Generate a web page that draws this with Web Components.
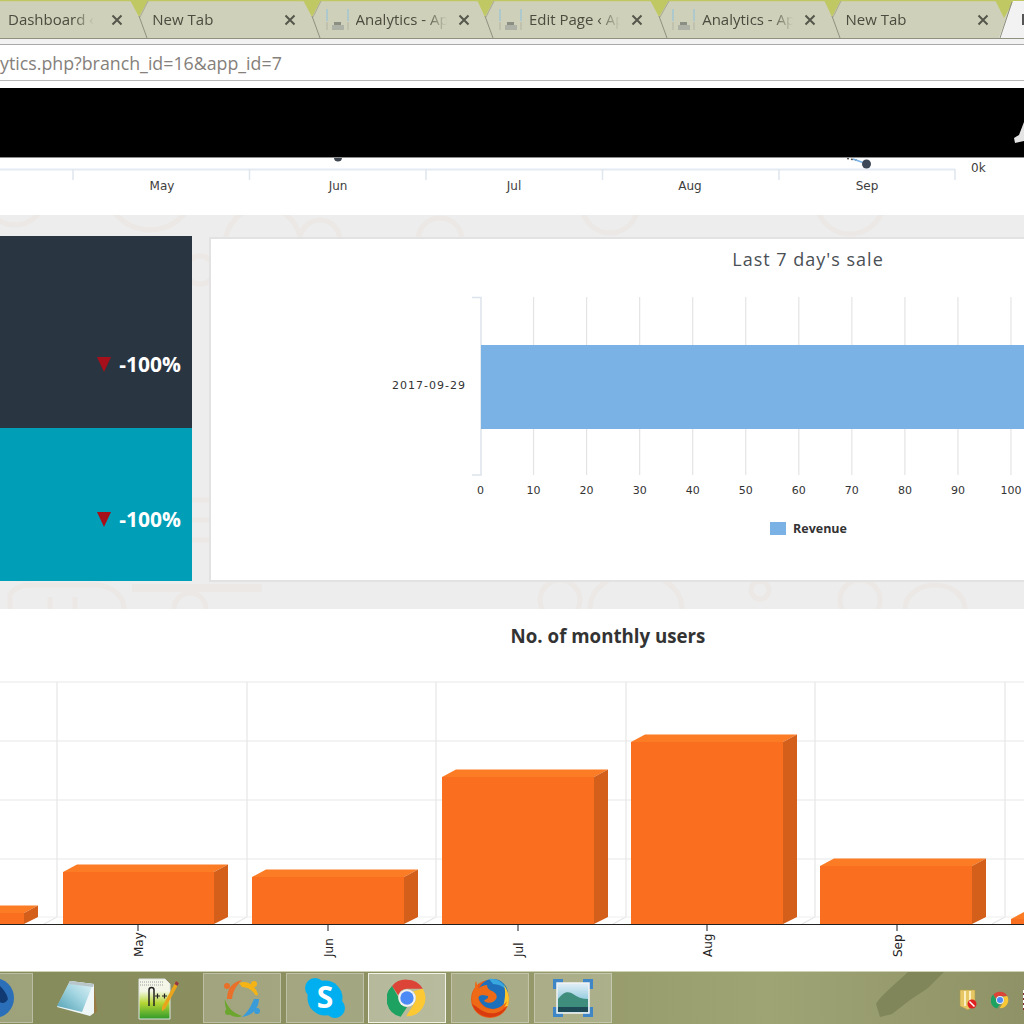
<!DOCTYPE html>
<html>
<head>
<meta charset="utf-8">
<title>Analytics</title>
<style>
	html, body { margin: 0; padding: 0; }
	body { width: 1024px; height: 1024px; overflow: hidden; display: flex; flex-direction: column; font-family: "Open Sans", "Liberation Sans", sans-serif; background: #fff; }
</style>
</head>
<body>

<browser-tabs>
	<browser-tab style="width:173.3px;--tab-pad:34px;--title-w:88px" plain>Dashboard ‹ App Lab</browser-tab>
	<browser-tab style="width:173.3px" plain>New Tab</browser-tab>
	<browser-tab style="width:173.3px">Analytics - App Lab</browser-tab>
	<browser-tab style="width:173.3px">Edit Page ‹ App Lab</browser-tab>
	<browser-tab style="width:173.3px">Analytics - App Lab</browser-tab>
	<browser-tab style="width:160px" plain>New Tab</browser-tab>
</browser-tabs>
<address-bar>ytics.php?branch_id=16&amp;app_id=7</address-bar>
<top-header></top-header>
<month-strip></month-strip>

<panel-row>
	<div slot="tiles">
		<stat-tile style="--tile-bg:#2a3542;--tile-h:192px;--tile-top:114px">-100%</stat-tile>
		<stat-tile style="--tile-bg:#009fb7;--tile-h:153px;--tile-top:77px">-100%</stat-tile>
	</div>
	<sale-chart slot="chart"></sale-chart>
</panel-row>

<users-chart></users-chart>

<task-bar>
	<task-button>
		<svg width="40" height="40" viewBox="0 0 40 40">
			<circle cx="20" cy="20" r="20" fill="#2a6fb8"/>
			<path d="M20 4c6 3 12 9 14 17-3 6-8 4-11 1s-7-2-9 2-1 9 4 12c-9 1-14-5-15-12 3-9 9-17 17-20z" fill="#123a72"/>
		</svg>
	</task-button>
	<task-button plain>
		<svg width="44" height="44" viewBox="0 0 44 44">
			<defs><linearGradient id="pad" x1="0" y1="1" x2="1" y2="0"><stop offset="0" stop-color="#4f9fb2"/><stop offset=".55" stop-color="#a4d6e2"/><stop offset="1" stop-color="#e4f4f7"/></linearGradient></defs>
			<path d="M39 8l3 27-3 3z" fill="#9a7a45"/>
			<path d="M15 5L39 8 39 37 35 40 2 31z" fill="#eef6f8"/>
			<path d="M15 5L38 8 27 36 2 30z" fill="url(#pad)"/>
			<path d="M15 5L39 8 38 11 14 8z" fill="#b9c6c9"/>
		</svg>
	</task-button>
	<task-button plain>
		<svg width="44" height="44" viewBox="0 0 44 44">
			<defs><linearGradient id="np" x1="0" y1="0" x2="0" y2="1"><stop offset=".3" stop-color="#f4f7e8"/><stop offset=".6" stop-color="#b5d634"/><stop offset="1" stop-color="#2f9a2a"/></linearGradient></defs>
			<path d="M2 3h26l5 5v35H2z" fill="url(#np)" stroke="#dfe3e3"/>
			<path d="M3 6h24M3 9h24" stroke="#9b9f9f" stroke-dasharray="1 1"/>
			<path d="M12 30V14a2.5 2.5 0 0 1 5 0v16" fill="none" stroke="#222" stroke-width="1.5"/>
			<path d="M18 20h5m-2.500-2.500v5M25 20h5m-2.500-2.500v5" stroke="#222" stroke-width="1.200"/>
			<path d="M39 5l3 2-14 26-3 2 0-4z" fill="#eaa51d"/>
			<path d="M39 5l3 2-1.500 3-3-2z" fill="#8f3a44"/>
		</svg>
	</task-button>
	<task-button>
		<svg width="40" height="42" viewBox="0 0 40 42">
			<path d="M5 22C5 12 10 5 20 3 14 9 11 14 10 22z" fill="#e8702a"/><circle cx="5" cy="9" r="3" fill="#e8702a"/>
			<path d="M17 6c8-3 15 1 19 11-1 3-3 1-4-1-3-4-7-6-12-6z" fill="#f5b414"/><circle cx="32" cy="7" r="3" fill="#f5b414"/>
			<path d="M37 22c0 9-7 17-17 18 6-5 9-11 12-18z" fill="#3a9bd9"/><circle cx="35" cy="34" r="3" fill="#3a9bd9"/>
			<path d="M3 22c2 8 8 14 17 17-3 2-10 1-13-2-2-2-5-9-4-15z" fill="#6da62f"/><circle cx="6" cy="35" r="3" fill="#6da62f"/>
		</svg>
	</task-button>
	<task-button>
		<svg width="42" height="42" viewBox="0 0 42 42">
			<circle cx="11" cy="11" r="10" fill="#00aff0"/><circle cx="31" cy="31" r="10" fill="#00aff0"/>
			<circle cx="21" cy="21" r="17.500" fill="#00aff0"/>
			<text x="21" y="31" text-anchor="middle" font-family="Open Sans, sans-serif" font-weight="700" font-size="30" fill="#fff">S</text>
		</svg>
	</task-button>
	<task-button active>
		<chrome-icon style="--size:40px"></chrome-icon>
	</task-button>
	<task-button>
		<svg width="42" height="42" viewBox="0 0 42 42">
			<circle cx="21" cy="22" r="19" fill="#ea5a16"/>
			<circle cx="24" cy="17" r="15" fill="#1f70ba"/>
			<path d="M20 2c8-1 15 4 18 11-4-4-9-6-14-6z" fill="#38a6df"/>
			<path d="M35 8c5 7 6 14 4 21l-5 1c2-7 3-15 1-22z" fill="#fcc52a"/>
			<path d="M7 4c1 3 2 5 2 8 3-3 6-4 9-4 0 3 2 5 5 6 4 2 6 5 4 8-2 4-8 5-12 2 1-2 5-2 4-5l-5-1c-3 0-4 1-5 3 1 6 7 11 13 11 6 1 12-3 16-8-2 8-9 14-18 14C10 38 3 30 3 22c0-4 1-8 3-11 0-2 0-5 1-7z" fill="#ef6a16"/>
			<path d="M3 27c3 8 10 13 18 13 8 0 14-4 17-11-6 7-15 9-22 6-5-2-9-6-13-8z" fill="#d83b0f"/>
		</svg>
	</task-button>
	<task-button>
		<svg width="42" height="40" viewBox="0 0 42 40">
			<defs><linearGradient id="sky" x1="0" y1="0" x2="0" y2="1"><stop offset="0" stop-color="#e4f0f7"/><stop offset=".5" stop-color="#9ccfe2"/><stop offset="1" stop-color="#6fb3c8"/></linearGradient></defs>
			<path d="M1 11V1h10v4H5v6zM31 1h10v10h-4V5h-6zM1 29h4v6h6v4H1zM37 29h4v10H31v-4h6z" fill="#3f86c6"/>
			<rect x="5" y="5" width="32" height="30" fill="url(#sky)" stroke="#f4f4f4" stroke-width="1.500"/>
			<path d="M6 21c6-8 11-8 15-5 4 3 9 5 15 5v8H6z" fill="#3f8d7c"/>
			<path d="M6 29h30v5H6z" fill="#1e4a55"/>
		</svg>
	</task-button>
</task-bar>

<template id="browserTabTemplate">
	<style>
		:host { display: flex; align-items: center; box-sizing: border-box; height: 38px; padding-left: var(--tab-pad, 5px); flex: none; position: relative; color: #4b4b3f; font: 15px "Open Sans", sans-serif; }
		.icon { flex: none; width: 23px; height: 23px; margin-right: 7px; }
		:host([plain]) .icon { display: none; }
		.title { flex: none; white-space: nowrap; overflow: hidden; -webkit-mask-image: linear-gradient(90deg, #000 75%, transparent 98%); mask-image: linear-gradient(90deg, #000 75%, transparent 98%); width: var(--title-w, 122px); }
		:host(:not([plain])) .title { width: 93px; }
		.close { position: absolute; left: 137px; top: 14px; width: 12px; height: 12px; }
	</style>
	<svg class="icon" viewBox="0 0 23 23">
		<path d="M1 1v12M22 1v12" stroke="#8cc1e0" stroke-width="1" fill="none"/>
		<path d="M1 14v8M22 14v8" stroke="#b0b3a5" fill="none"/>
		<path d="M6 17h12v5H6z" fill="#aeb1a6"/>
		<path d="M8 14h7v3H8z" fill="#8b8e83"/>
	</svg>
	<span class="title"><slot></slot></span>
	<svg class="close" viewBox="0 0 12 12"><path d="M1.500 1.500l9 9m0-9l-9 9" stroke="#55564c" stroke-width="2"/></svg>
</template>

<template id="browserTabsTemplate">
	<style>
		:host { display: block; position: relative; height: 44px; background: #f2f2f2; border-bottom: 1px solid #a9a9a9; box-sizing: content-box; flex: none; overflow: hidden; }
		.strip { display: flex; margin-left: -26px; height: 38px; background: #cfd0b9; box-shadow: 0 1px 0 #8f9080; width: 1100px; }
		.shape { position: absolute; left: 0; top: 0; }
	</style>
	<div class="strip"><slot></slot></div>
	<svg class="shape" width="1024" height="44" viewBox="0 0 1024 44"></svg>
</template>

<template id="addressBarTemplate">
	<style>
		:host { display: block; flex: none; height: 35px; background: #fff; border-bottom: 1px solid #b9b9b9; overflow: hidden; color: #85807b; font: 17.800px/36px "Open Sans", sans-serif; }
		.url { display: block; white-space: nowrap; }
	</style>
	<span class="url"><slot></slot></span>
</template>

<template id="topHeaderTemplate">
	<style>
		:host { display: block; flex: none; margin-top: 7px; height: 69px; background: #000; border-bottom: 1px solid #8d8d8d; position: relative; overflow: hidden; }
		svg { display: block; }
	</style>
	<svg width="1024" height="69" viewBox="0 88 1024 69"><path d="M1024 122l-5 13-5 3 1 5 9-2z" fill="#e4e4e4"/></svg>
</template>

<template id="monthStripTemplate">
	<style>
		:host { display: block; flex: none; height: 57px; background: #fff; overflow: hidden; }
		svg { display: block; }
		text { font: 12px "DejaVu Sans", sans-serif; fill: #3d3d3d; }
	</style>
	<svg width="1024" height="57" viewBox="0 158 1024 57">
		<path d="M0 169.500H955" stroke="#e4eaf1" stroke-width="2"/>
		<path d="M73 169v11M249.500 169v11M426 169v11M602.500 169v11M779 169v11M955 169v11" stroke="#dfe6ee" stroke-width="1.500"/>
		<text x="162" y="190" text-anchor="middle">May</text>
		<text x="338" y="190" text-anchor="middle">Jun</text>
		<text x="514" y="190" text-anchor="middle">Jul</text>
		<text x="690" y="190" text-anchor="middle">Aug</text>
		<text x="867" y="190" text-anchor="middle">Sep</text>
		<text x="971" y="172">0k</text>
		<circle cx="338" cy="157.500" r="4" fill="#3f4650"/>
		<path d="M847 158.500l12 2" stroke="#555" stroke-width="1.500" stroke-dasharray="2 2"/>
		<path d="M853 159l14 5" stroke="#7ab2e6" stroke-width="1.500"/>
		<circle cx="866.500" cy="164" r="4.500" fill="#3c4858"/>
	</svg>
</template>

<template id="panelRowTemplate">
	<style>
		:host { display: flex; flex: none; position: relative; gap: 17px; height: 394px; box-sizing: border-box; padding-top: 21px; background: #eeeded; overflow: hidden; }
		.doodle { position: absolute; left: 0; top: 0; }
		.tiles { position: relative; flex: none; width: 192px; }
		.chart { position: relative; flex: none; }
	</style>
	<svg class="doodle" width="1024" height="394" viewBox="0 215 1024 394" fill="none" stroke="#ebe8e5" stroke-width="5">
		<circle cx="15" cy="195" r="30"/><circle cx="150" cy="185" r="45"/><circle cx="263" cy="245" r="38"/>
		<circle cx="320" cy="240" r="20"/><circle cx="440" cy="240" r="22"/>
		<circle cx="850" cy="200" r="34"/><circle cx="610" cy="205" r="28"/>
		<circle cx="200" cy="270" r="14"/>
		<path d="M192 500h17M192 520h17M192 540h17"/>
		<path d="M132 588h130" stroke-width="8"/><path d="M10 609v-14a20 16 0 0 1 20-10h60a30 24 0 0 1 34 24"/>
		<path d="M50 609v-12M75 609v-12"/><circle cx="190" cy="609" r="16"/>
		<circle cx="560" cy="600" r="20"/><path d="M590 609a46 36 0 0 1 92 0"/><circle cx="760" cy="590" r="9"/><circle cx="860" cy="600" r="20"/>
		<path d="M905 609a30 24 0 0 1 60 0"/>
	</svg>
	<div class="tiles"><slot name="tiles"></slot></div>
	<div class="chart"><slot name="chart"></slot></div>
</template>

<template id="statTileTemplate">
	<style>
		:host { display: flex; justify-content: flex-end; box-sizing: border-box; height: var(--tile-h); padding: var(--tile-top) 11px 0 0; background: var(--tile-bg); color: #fff; font: 700 21px/28px "Open Sans", sans-serif; }
		.down { width: 0; height: 0; margin: 7px 8px 0 0; border-left: 7.500px solid transparent; border-right: 7.500px solid transparent; border-top: 15px solid #a5101a; }
	</style>
	<span class="down"></span><span><slot></slot></span>
</template>

<template id="saleChartTemplate">
	<style>
		:host { display: block; width: 1000px; height: 345px; box-sizing: border-box; background: #fff; border: 2px solid #e2e2e2; border-right: 0; margin-top: 0.500px; }
		svg { display: block; }
		text { font-family: "DejaVu Sans", sans-serif; fill: #333; font-size: 11px; }
		.title { font: 18px "Open Sans", sans-serif; letter-spacing: 1px; fill: #4a4f55; }
		.legend { font: 700 12.500px "Open Sans", sans-serif; fill: #333; }
	</style>
	<svg width="1000" height="343" viewBox="211 239 1000 343"></svg>
</template>

<template id="usersChartTemplate">
	<style>
		:host { display: block; flex: none; height: 362px; background: #fff; overflow: hidden; }
		svg { display: block; }
		.title { font: 700 18.700px "Open Sans", sans-serif; fill: #333; }
		.tick { font: 12px "DejaVu Sans", sans-serif; fill: #222; }
	</style>
	<svg width="1024" height="362" viewBox="0 609 1024 362"></svg>
</template>

<template id="taskBarTemplate">
	<style>
		:host { display: flex; flex: 1; align-items: stretch; position: relative; box-sizing: border-box; padding: 1px 0 2px; border-top: 1px solid #cfd2b4; background: linear-gradient(90deg, #868b5b 0%, #8d9162 35%, #9fa475 75%, #8e9266 100%); overflow: hidden; }
		.blob { position: absolute; left: 860px; top: 0; }
		.inner { display: flex; gap: 4.700px; margin-left: -45px; position: relative; }
		.tray { position: absolute; left: 959px; top: 17px; display: flex; align-items: center; gap: 14px; }
		.cut { width: 6px; height: 20px; background: repeating-linear-gradient(#fff 0 3px, #7d2a2a 3px 5px); }
	</style>
	<svg class="blob" width="90" height="52" viewBox="0 0 90 52"><path d="M16 32C20 24 40 8 48 0H84L68 16 50 28 32 42 20 45z" fill="#80855a"/></svg>
	<div class="inner"><slot></slot></div>
	<div class="tray">
		<svg width="18" height="22" viewBox="0 0 18 22">
			<path d="M1 1h15v14l-7 6-8-4z" fill="#e6c764" stroke="#b09a4f" stroke-width=".6"/>
			<path d="M6 2v15M11 2v14" stroke="#fbefc0" stroke-width="2"/>
			<circle cx="13" cy="15" r="4.500" fill="#e02020"/><path d="M10.500 12.500l5 5" stroke="#fff" stroke-width="1.500"/>
		</svg>
		<chrome-icon style="--size:18px"></chrome-icon>
		<span class="cut"></span>
	</div>
</template>

<template id="taskButtonTemplate">
	<style>
		:host { display: flex; align-items: center; justify-content: center; box-sizing: border-box; width: 78px; height: 50px; background: rgba(255,255,255,.2); border: 1px solid rgba(255,255,255,.3); }
		:host([plain]) { background: none; border-color: transparent; }
		:host([active]) { background: rgba(255,255,255,.36); border: 1.500px solid #f0f2e6; }
	</style>
	<slot></slot>
</template>

<template id="chromeIconTemplate">
	<style>
		:host { display: block; width: var(--size); height: var(--size); }
		svg { display: block; width: 100%; height: 100%; }
	</style>
	<svg viewBox="0 0 48 48">
		<path d="M24 2a22 22 0 0 1 19.100 11H24a11 11 0 0 0-10.500 7.800L6 9.500A22 22 0 0 1 24 2z" fill="#db4437"/>
		<path d="M6 9.500l7.900 13.800A11 11 0 0 0 24 35l-7.600 11.600A22 22 0 0 1 6 9.500z" fill="#1da261"/>
		<path d="M43.100 13A22 22 0 0 1 24 46h-1l8.900-14.500A11 11 0 0 0 31.500 16z" fill="#fcc934"/>
		<circle cx="24" cy="24" r="10.500" fill="#f1f1f1"/>
		<circle cx="24" cy="24" r="8" fill="#4c8bf5"/>
	</svg>
</template>

<script type="text/javascript">
	// shared boilerplate: every element clones its template into an open root
	class TemplateElement extends HTMLElement {
		constructor(templateId) {
			super();
			const template = document.querySelector(templateId);
			this.attachShadow({mode: 'open'}).appendChild(template.content.cloneNode(true));
		}
	}

	class BrowserTab extends TemplateElement {
		constructor() { super('#browserTabTemplate'); }
	}

	class BrowserTabs extends TemplateElement {
		constructor() {
			super('#browserTabsTemplate');
			// notch tips between the tabs
			const notches = [[130, 148, 139, 147], [303, 321, 312, 320], [477, 494, 485, 493], [650, 669, 659, 667], [824, 841, 832, 840]];
			let out = '<path d="M0 .5H1024" stroke="#c0c863" stroke-width="1.5"/>';
			notches.forEach(n => {
				out += `<path d="M${n[0]} 0H${n[1]}L${n[2]} 17z" fill="#c0c863"/>`;
				out += `<path d="M${n[2]} 16L${n[3]} 38" stroke="#8f9080" fill="none"/><path d="M${n[1]} 1L${n[2]+1} 17" stroke="#a8a98f" fill="none"/>`;
			});
			out += '<path d="M995 0H1014L1004 18z" fill="#c0c863"/>';
			out += '<path d="M1024 1H1013L999 38H1024z" fill="#f2f2f2"/><path d="M1012 2L1000 38" stroke="#8f9080" fill="none"/>';
			out += '<path d="M1023 14v11" stroke="#555" stroke-width="2"/>';
			this.shadowRoot.querySelector('.shape').innerHTML = out;
		}
	}

	class AddressBar extends TemplateElement {
		constructor() { super('#addressBarTemplate'); }
	}

	class TopHeader extends TemplateElement {
		constructor() { super('#topHeaderTemplate'); }
	}

	class MonthStrip extends TemplateElement {
		constructor() { super('#monthStripTemplate'); }
	}

	class PanelRow extends TemplateElement {
		constructor() { super('#panelRowTemplate'); }
	}

	class StatTile extends TemplateElement {
		constructor() { super('#statTileTemplate'); }
	}

	class SaleChart extends TemplateElement {
		constructor() {
			super('#saleChartTemplate');
			let out = '<text class="title" x="808" y="266" text-anchor="middle">Last 7 day\'s sale</text>';
			for (let i = 1; i <= 10; i++) {
				const x = 480.5 + i * 53.05;
				out += `<path d="M${x} 297V475" stroke="#e4e4e4" stroke-width="1.2"/>`;
			}
			out += '<path d="M472 297.500H481V475H472" fill="none" stroke="#dbe3ec" stroke-width="1.5"/>';
			out += '<rect x="481" y="345" width="600" height="84" fill="#7ab2e6"/>';
			out += '<text x="392" y="389" letter-spacing="1">2017-09-29</text>';
			for (let i = 0; i <= 10; i++) {
				out += `<text x="${480.5 + i * 53.05}" y="494" text-anchor="middle">${i * 10}</text>`;
			}
			out += '<rect x="770" y="522" width="16" height="13" fill="#7ab2e6"/>';
			out += '<text class="legend" x="793" y="533">Revenue</text>';
			this.shadowRoot.querySelector('svg').innerHTML = out;
		}
	}

	class UsersChart extends TemplateElement {
		constructor() {
			super('#usersChartTemplate');
			let out = '<text class="title" x="608" y="643" text-anchor="middle">No. of monthly users</text>';
			[682, 741, 800, 859].forEach(y => { out += `<path d="M0 ${y}H1024" stroke="#e8e8e8" stroke-width="1.2"/>`; });
			[57, 247, 436, 626, 815, 1005].forEach(x => {
				out += `<path d="M${x} 682V917L${x - 13} 924" stroke="#e6e6e6" stroke-width="1.2" fill="none"/>`;
			});
			out += '<path d="M0 917H1024" stroke="#efefef" stroke-width="1.2"/>';
			// [front left, front right, front top]
			const bars = [[-128, 24, 913], [63, 214, 872], [252, 404, 877], [442, 594, 777], [631, 783, 742], [820, 972, 866], [1011, 1163, 919]];
			bars.forEach(b => {
				out += `<rect x="${b[0]}" y="${b[2]}" width="${b[1] - b[0]}" height="${924 - b[2]}" fill="#fa6e20"/>`;
				out += `<path d="M${b[0]} ${b[2]}L${b[0] + 14} ${b[2] - 7.5}H${b[1] + 14}L${b[1]} ${b[2]}z" fill="#fb7c25"/>`;
				out += `<path d="M${b[1]} ${b[2]}L${b[1] + 14} ${b[2] - 7.5}V917L${b[1]} 924z" fill="#d35f1b"/>`;
			});
			out += '<path d="M0 924.500H1024" stroke="#222" stroke-width="1.2"/>';
			[['May', 138], ['Jun', 328], ['Jul', 518], ['Aug', 707], ['Sep', 897]].forEach(t => {
				out += `<path d="M${t[1]} 925V931" stroke="#666" stroke-width="1.5"/>`;
				out += `<text class="tick" transform="translate(${t[1] + 5} 957) rotate(-90)">${t[0]}</text>`;
			});
			this.shadowRoot.querySelector('svg').innerHTML = out;
		}
	}

	class TaskBar extends TemplateElement {
		constructor() { super('#taskBarTemplate'); }
	}

	class TaskButton extends TemplateElement {
		constructor() { super('#taskButtonTemplate'); }
	}

	class ChromeIcon extends TemplateElement {
		constructor() { super('#chromeIconTemplate'); }
	}

	window.customElements.define('browser-tab', BrowserTab);
	window.customElements.define('browser-tabs', BrowserTabs);
	window.customElements.define('address-bar', AddressBar);
	window.customElements.define('top-header', TopHeader);
	window.customElements.define('month-strip', MonthStrip);
	window.customElements.define('panel-row', PanelRow);
	window.customElements.define('stat-tile', StatTile);
	window.customElements.define('sale-chart', SaleChart);
	window.customElements.define('users-chart', UsersChart);
	window.customElements.define('task-bar', TaskBar);
	window.customElements.define('task-button', TaskButton);
	window.customElements.define('chrome-icon', ChromeIcon);
</script>
</body>
</html>
